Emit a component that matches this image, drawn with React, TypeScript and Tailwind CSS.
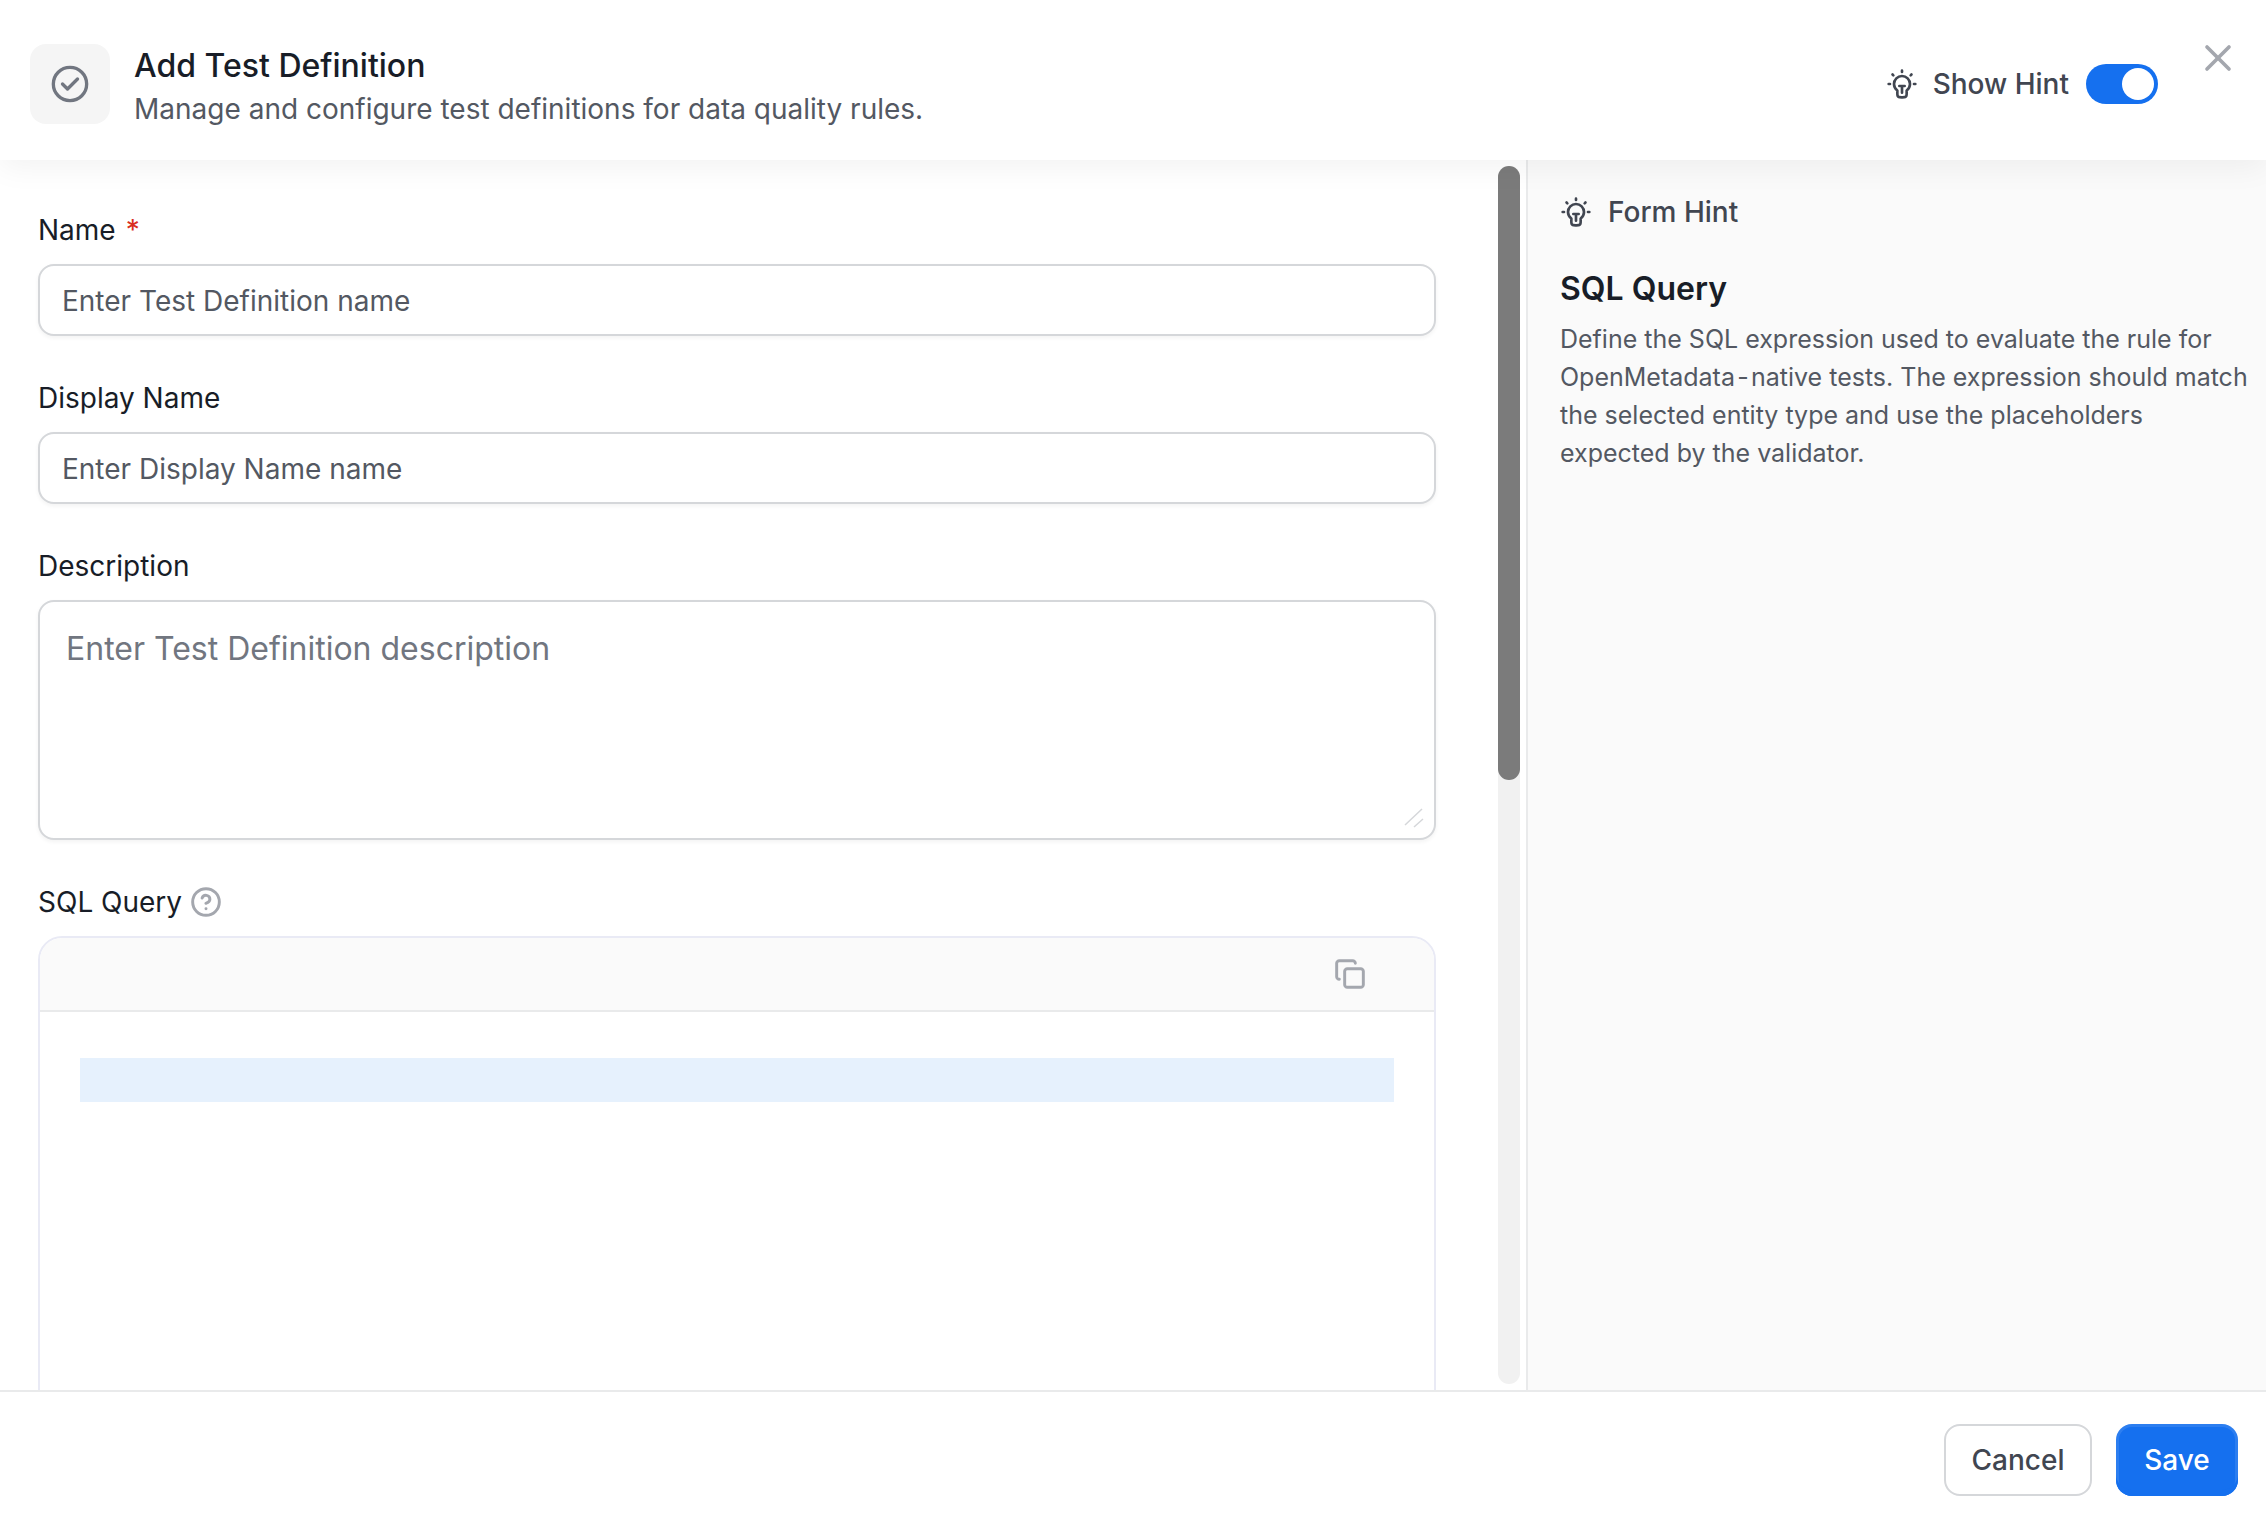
import React from "react";
import { Copy, CircleHelp, X } from "lucide-react";

const Bulb = ({ className }: { className?: string }) => (
  <svg viewBox="0 0 24 24" fill="none" stroke="currentColor" strokeWidth="2" strokeLinecap="round" strokeLinejoin="round" className={className}>
    <path d="M12 2V3M3 12H2M5.5 5.5L4.9 4.9M18.5 5.5L19.1 4.9M22 12H21M10 13.5H14M12 13.5V18.5M15.5 16.874C17.014 15.785 18 14.008 18 12C18 8.686 15.314 6 12 6C8.686 6 6 8.686 6 12C6 14.008 6.986 15.785 8.5 16.874V18.8C8.5 19.92 8.5 20.48 8.718 20.908C8.91 21.284 9.216 21.59 9.592 21.782C10.02 22 10.58 22 11.7 22H12.3C13.42 22 13.98 22 14.408 21.782C14.784 21.59 15.09 21.284 15.282 20.908C15.5 20.48 15.5 19.92 15.5 18.8V16.874Z" />
  </svg>
);

const CheckCircle = ({ className }: { className?: string }) => (
  <svg viewBox="0 0 24 24" fill="none" stroke="currentColor" strokeWidth="2" strokeLinecap="round" strokeLinejoin="round" className={className}>
    <circle cx="12" cy="12" r="10" />
    <path d="M7.5 12L10.5 15L16.5 9" />
  </svg>
);

const inputCls =
  "block w-full h-[72px] rounded-[16px] border-2 border-[#d5d7da] bg-white px-[22px] pt-[2px] text-[28px] text-[#181d27] shadow-[0_2px_4px_rgba(10,13,18,0.05)] outline-none placeholder:text-[#535862]";

const labelCls = "flex h-10 items-center text-[28px] leading-10 text-[#181d27] mb-[14px]";

export default function App() {
  return (
    <div className="flex h-[1516px] w-[2266px] flex-col overflow-hidden bg-white font-['Inter',sans-serif]">
      {/* Header */}
      <header className="relative z-10 flex h-[160px] shrink-0 items-center bg-white pl-[30px] pr-[26px] pt-[8px] shadow-[0_8px_28px_rgba(0,0,0,0.05)]">
        <div className="flex h-20 w-20 items-center justify-center rounded-[16px] bg-[#f5f5f5]">
          <CheckCircle className="h-10 w-10 text-[#717680]" />
        </div>
        <div className="ml-[24px] flex-1 pt-[4px]">
          <h1 className="text-[32px] font-medium leading-[46px] text-[#181d27]">Add Test Definition</h1>
          <p className="text-[28px] leading-[40px] text-[#535862]">Manage and configure test definitions for data quality rules.</p>
        </div>
        <div className="flex items-center">
          <Bulb className="h-8 w-8 text-[#414651]" />
          <span className="ml-[15px] text-[28px] font-medium text-[#414651]">Show Hint</span>
          <div className="ml-[17px] flex h-10 w-[72px] items-center justify-end rounded-full bg-[#1570ef] pr-1">
            <div className="h-8 w-8 rounded-full bg-white" />
          </div>
        </div>
        <X className="mb-[52px] ml-[38px] h-11 w-11 text-[#a4a7ae]" strokeWidth={2} />
      </header>

      {/* Body */}
      <div className="flex min-h-0 flex-1">
        <div className="flex w-[1528px] shrink-0 border-r-2 border-[#e9eaeb]">
          <div className="min-w-0 flex-1 overflow-hidden pl-[38px] pr-[62px] pt-[50px]">
            <label className={labelCls}>
              Name <span className="ml-[10px] text-[#d92d20]">*</span>
            </label>
            <input className={inputCls} placeholder="Enter Test Definition name" />

            <label className={`${labelCls} mt-[42px]`}>Display Name</label>
            <input className={inputCls} placeholder="Enter Display Name name" />

            <label className={`${labelCls} mt-[42px]`}>Description</label>
            <div className="relative">
              <textarea
                className="block h-[240px] w-full resize-none rounded-[16px] border-2 border-[#d5d7da] bg-white px-[26px] py-[25px] text-[32px] leading-[44px] shadow-[0_2px_4px_rgba(10,13,18,0.05)] outline-none placeholder:text-[#717680]"
                placeholder="Enter Test Definition description"
              />
              {/* resize grip */}
              <svg viewBox="0 0 20 20" fill="none" stroke="#d5d7da" strokeWidth="1.5" className="absolute bottom-[12px] right-[12px] h-5 w-5">
                <path d="M1 17L18 1M10 19L19 11" />
              </svg>
            </div>

            <label className={`${labelCls} mt-[42px]`}>
              SQL Query
              <CircleHelp className="ml-[8px] h-8 w-8 text-[#a4a7ae]" strokeWidth={2.2} />
            </label>
            <div className="h-[600px] rounded-[24px] border-2 border-[#e9eaf5] bg-white">
              <div className="flex h-[74px] items-center justify-end rounded-t-[22px] border-b-2 border-[#e9eaeb] bg-[#fafafa] pr-[68px]">
                <Copy className="h-8 w-8 text-[#a4a7ae]" strokeWidth={2.2} />
              </div>
              <div className="px-[40px] pt-[46px]">
                <div className="h-[44px] bg-[#e6f1fd]" />
              </div>
            </div>
          </div>
          {/* Scrollbar */}
          <div className="mb-[6px] mr-[6px] mt-[6px] w-[22px] shrink-0 rounded-full bg-[#f1f1f1]">
            <div className="h-[614px] rounded-full bg-[#7b7b7b]" />
          </div>
        </div>

        {/* Hint panel */}
        <aside className="min-w-0 flex-1 bg-[#fafafa] pl-[32px] pr-[12px] pt-[36px]">
          <div className="flex items-center">
            <Bulb className="h-8 w-8 text-[#414651]" />
            <span className="ml-[16px] text-[28px] font-medium leading-[32px] text-[#414651]">Form Hint</span>
          </div>
          <h2 className="mt-[39px] text-[32px] font-semibold leading-[44px] text-[#181d27]">SQL Query</h2>
          <p className="mt-[9px] text-[25px] leading-[38px] text-[#535862]">
            Define the SQL expression used to evaluate the rule for OpenMetadata{"\u200A-\u200A"}native tests. The expression should match the selected entity type and use the placeholders expected by the validator.
          </p>
        </aside>
      </div>

      {/* Footer */}
      <footer className="flex h-[126px] shrink-0 items-start justify-end gap-6 border-t-2 border-[#e9eaeb] bg-white pr-[28px] pt-[32px]">
        <button className="h-[72px] w-[148px] rounded-[16px] border-2 border-[#d5d7da] bg-white text-[28px] font-medium text-[#414651]">Cancel</button>
        <button className="h-[72px] w-[122px] rounded-[16px] bg-[#1570ef] text-[28px] font-medium text-white shadow-[inset_0_-6px_0_#1570ef,inset_0_0_0_3px_rgba(255,255,255,0.1)]">Save</button>
      </footer>
    </div>
  );
}
